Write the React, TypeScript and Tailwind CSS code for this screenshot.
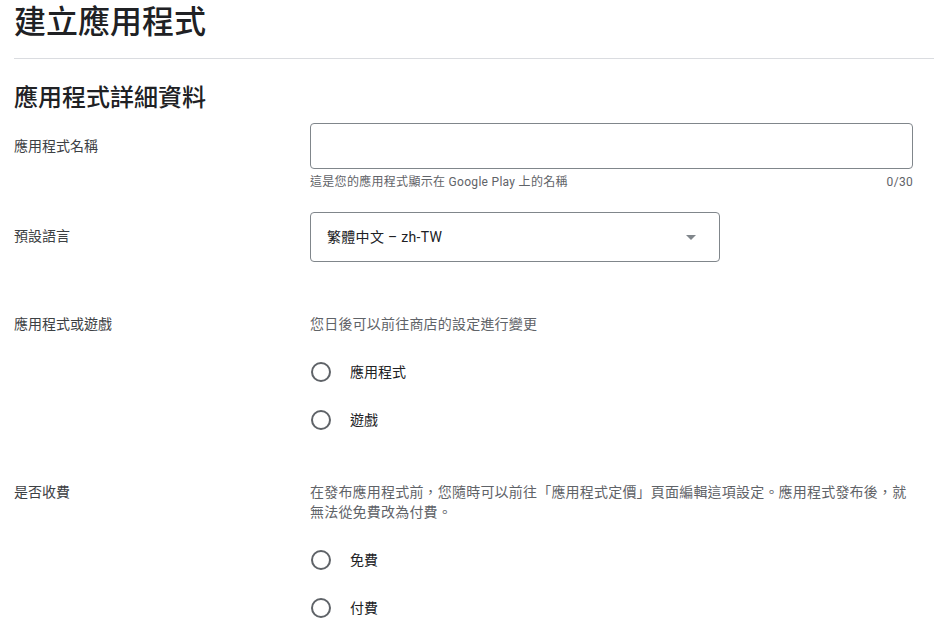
import React from "react";

const font = { fontFamily: 'Roboto, "Noto Sans CJK TC", "Noto Sans", sans-serif' };

function Radio({ label }: { label: string }) {
  return (
    <div className="flex h-[48px] items-center">
      <span className="ml-[1px] box-border h-[20px] w-[20px] rounded-full border-2 border-[#5f6368]" />
      <span className="ml-[19px] text-[14px] leading-5 text-[#202124]">{label}</span>
    </div>
  );
}

export default function App() {
  return (
    <div style={font} className="min-h-[625px] w-full bg-white pl-[14px] text-[#202124]">
      <h1 className="pt-[2px] text-[32px] font-medium leading-[40px] text-[#202124]">建立應用程式</h1>
      <div className="mt-[16px] h-px bg-[#dadce0]" />
      <h2 className="mt-[24px] text-[24px] font-medium leading-[31px] text-[#202124]">應用程式詳細資料</h2>

      <div className="mt-[9px] flex">
        <div className="w-[296px] shrink-0 pt-[13px] text-[14px] leading-5 text-[#3c4043]">應用程式名稱</div>
        <div className="w-[603px]">
          <div className="h-[46px] rounded-[4px] border border-[#80868b]" />
          <div className="mt-[5px] flex justify-between text-[12px] leading-4 tracking-[0.3px] text-[#5f6368]">
            <span>這是您的應用程式顯示在 Google Play 上的名稱</span>
            <span>0/30</span>
          </div>
        </div>
      </div>

      <div className="mt-[22px] flex">
        <div className="w-[296px] shrink-0 pt-[14px] text-[14px] leading-5 text-[#3c4043]">預設語言</div>
        <div className="flex h-[50px] w-[410px] items-center justify-between rounded-[4px] border border-[#80868b] pl-[16px] pr-[23px]">
          <span className="text-[14px] leading-5 tracking-[0.3px] text-[#202124]">繁體中文 – zh-TW</span>
          <svg width="10" height="5" viewBox="0 0 10 5">
            <path d="M0 0 L10 0 L5 5 Z" fill="#80868b" />
          </svg>
        </div>
      </div>

      <div className="mt-[52px] flex">
        <div className="w-[296px] shrink-0 text-[14px] leading-5 text-[#3c4043]">應用程式或遊戲</div>
        <div>
          <div className="text-[14px] leading-5 tracking-[0.2px] text-[#5f6368]">您日後可以前往商店的設定進行變更</div>
          <div className="mt-[14px]">
            <Radio label="應用程式" />
            <Radio label="遊戲" />
          </div>
        </div>
      </div>

      <div className="mt-[38px] flex">
        <div className="w-[296px] shrink-0 text-[14px] leading-5 text-[#3c4043]">是否收費</div>
        <div className="w-[603px]">
          <div className="text-[14px] leading-5 tracking-[0.2px] text-[#5f6368]">
            在發布應用程式前，您隨時可以前往「應用程式定價」頁面編輯這項設定。應用程式發布後，就
            <br />
            無法從免費改為付費。
          </div>
          <div className="mt-[14px]">
            <Radio label="免費" />
            <Radio label="付費" />
          </div>
        </div>
      </div>
    </div>
  );
}
